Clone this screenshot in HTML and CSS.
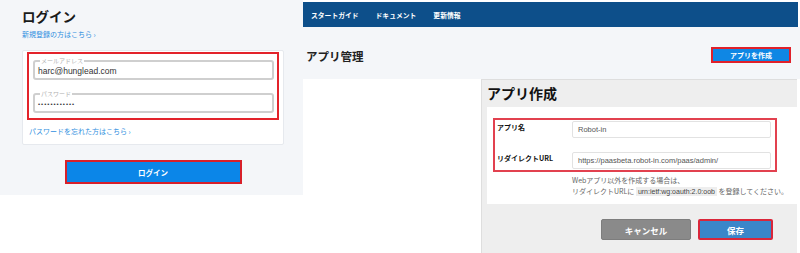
FILE: index.html
```html
<!DOCTYPE html>
<html lang="ja">
<head>
<meta charset="utf-8">
<link rel="stylesheet" href="styles.css">
</head>
<body>
<div class="page">
  <section class="login">
    <h1 class="login-title">ログイン</h1>
    <a class="link signup">新規登録の方はこちら ›</a>
    <div class="login-card">
      <div class="redbox">
        <div class="field">
          <span class="legend">メールアドレス</span>
          <span class="value">harc@hunglead.com</span>
        </div>
        <div class="field">
          <span class="legend">パスワード</span>
          <span class="value dots">••••••••••••</span>
        </div>
      </div>
      <a class="link forgot">パスワードを忘れた方はこちら ›</a>
    </div>
    <div class="btn-row">
      <button class="login-btn">ログイン</button>
    </div>
  </section>

  <section class="console">
    <nav class="navbar">
      <span>スタートガイド</span>
      <span>ドキュメント</span>
      <span>更新情報</span>
    </nav>
    <header class="head">
      <h2 class="head-title">アプリ管理</h2>
      <button class="create-btn">アプリを作成</button>
    </header>
    <div class="lower">
      <div class="dialog">
        <h3 class="dialog-title">アプリ作成</h3>
        <div class="dialog-card">
          <div class="form-box">
            <div class="form-row">
              <label>アプリ名</label>
              <div class="text-input">Robot-in</div>
            </div>
            <div class="form-row">
              <label>リダイレクトURL</label>
              <div class="text-input">https://paasbeta.robot-in.com/paas/admin/</div>
            </div>
          </div>
          <p class="help">Webアプリ以外を作成する場合は、<br>リダイレクトURLに <code>urn:ietf:wg:oauth:2.0:oob</code> を登録してください。</p>
        </div>
        <div class="actions">
          <button class="btn cancel">キャンセル</button>
          <button class="btn save">保存</button>
        </div>
      </div>
    </div>
  </section>
</div>
</body>
</html>
```

FILE: styles.css
```css
* { box-sizing: border-box; }
html, body { margin: 0; padding: 0; background: #fff; }
body {
  font-family: "Noto Sans CJK JP", "Noto Sans", "Liberation Sans", sans-serif;
  color: #222;
  width: 800px;
  height: 253px;
  overflow: hidden;
}
.page { display: flex; align-items: flex-start; width: 800px; }

/* Left login panel */
.login {
  flex: 0 0 303px;
  width: 303px;
  height: 195px;
  background: #f4f6f9;
  padding: 7px 19px 0 22px;
  display: flex;
  flex-direction: column;
}
.login-title {
  margin: 0;
  font-size: 13.5px;
  line-height: 19px;
  font-weight: 700;
  color: #1a1a1a;
}
.link {
  color: #2f8fe0;
  font-size: 7px;
  line-height: 11px;
}
.signup { margin-top: 3px; }
.login-card {
  margin-top: 10px;
  background: #fff;
  border: 1px solid #e6e9ee;
  border-radius: 2px;
  padding: 1px 4px 7px 4px;
  display: flex;
  flex-direction: column;
}
.redbox {
  border: 2px solid #e3232b;
  padding: 6px 3px 5px 4px;
  display: flex;
  flex-direction: column;
  gap: 13px;
}
.field {
  border: 2px solid #cfcfcf;
  border-radius: 3px;
  height: 20px;
  padding: 0 3px;
  position: relative;
  display: flex;
  align-items: center;
}
.legend {
  position: absolute;
  left: 5px;
  top: -6px;
  font-size: 6px;
  line-height: 9px;
  color: #b0b0b0;
  padding: 0 1px;
  background: #fff;
}
.value {
  font-family: "Liberation Sans", "Noto Sans", sans-serif;
  font-size: 8.5px;
  line-height: 12px;
  color: #333;
  margin-top: 2px;
}
.dots { font-size: 6px; letter-spacing: 1px; }
.forgot { margin-top: 6px; margin-left: 2px; }
.btn-row {
  display: flex;
  justify-content: center;
  margin-top: 15px;
}
.login-btn {
  width: 177px;
  height: 24px;
  background: #0b86e8;
  border: 2px solid #d8202a;
  color: #fff;
  font-family: inherit;
  font-size: 7.5px;
  font-weight: 700;
  padding: 0;
}

/* Right console */
.console {
  flex: 1 1 auto;
  min-width: 0;
  display: flex;
  flex-direction: column;
}
.navbar {
  margin: 2px 2px 0 0;
  height: 25px;
  background: #0d4f8a;
  display: flex;
  align-items: center;
  gap: 17px;
  padding-left: 8px;
}
.navbar span {
  color: #fff;
  font-size: 6.8px;
  font-weight: 700;
}
.head {
  height: 52px;
  background: #f4f6f9;
  display: flex;
  align-items: center;
  justify-content: space-between;
  padding: 6px 9px 0 3px;
}
.head-title {
  margin: 0;
  font-size: 11.5px;
  font-weight: 700;
  color: #222;
}
.create-btn {
  width: 80px;
  height: 16px;
  background: #0f87e4;
  border: 2px solid #e0202a;
  color: #fff;
  font-family: inherit;
  font-size: 7px;
  font-weight: 700;
  padding: 0;
  margin-top: -2px;
}
.lower {
  display: flex;
  padding-left: 178px;
  padding-right: 3px;
}
.dialog {
  flex: 1;
  min-width: 0;
  height: 174px;
  background: #eeeeee;
  border: 1px solid #dedede;
  border-right: 0;
  border-bottom: 0;
  padding-left: 5px;
  display: flex;
  flex-direction: column;
}
.dialog-title {
  margin: 0;
  font-size: 14px;
  line-height: 22px;
  font-weight: 700;
  color: #111;
  padding-top: 2px;
  height: 27px;
}
.dialog-card {
  background: #fff;
  height: 97px;
  padding: 11px 20px 0 6px;
}
.form-box {
  border: 2px solid #e2414f;
  padding: 1px 4px 1px 2px;
  display: flex;
  flex-direction: column;
  gap: 14px;
}
.form-row {
  display: flex;
  align-items: flex-start;
}
.form-row label {
  width: 75px;
  font-size: 7px;
  font-weight: 700;
  padding-top: 1px;
  color: #111;
}
.text-input {
  flex: 1;
  height: 17px;
  border: 1px solid #e2e2e2;
  border-radius: 2px;
  font-family: "Liberation Sans", "Noto Sans", sans-serif;
  font-size: 7.5px;
  color: #555;
  display: flex;
  align-items: center;
  padding-left: 5px;
}
.help {
  margin: 3px 0 0 79px;
  font-size: 7px;
  line-height: 11px;
  color: #666;
  white-space: nowrap;
}
.help code {
  font-family: "Liberation Sans", "Noto Sans", sans-serif;
  font-size: 7px;
  background: #eeeeee;
  padding: 1px 2px;
  color: #444;
}
.actions {
  display: flex;
  justify-content: flex-end;
  gap: 7px;
  padding-right: 24px;
  margin-top: 15px;
}
.btn {
  height: 21px;
  border-radius: 2px;
  color: #fff;
  font-family: inherit;
  font-size: 8.5px;
  font-weight: 700;
  padding: 0;
}
.cancel {
  width: 90px;
  background: #8a8a8a;
  border: 1px solid #7d7d7d;
}
.save {
  width: 75px;
  background: #3a86c9;
  border: 2px solid #d9263a;
}
```
